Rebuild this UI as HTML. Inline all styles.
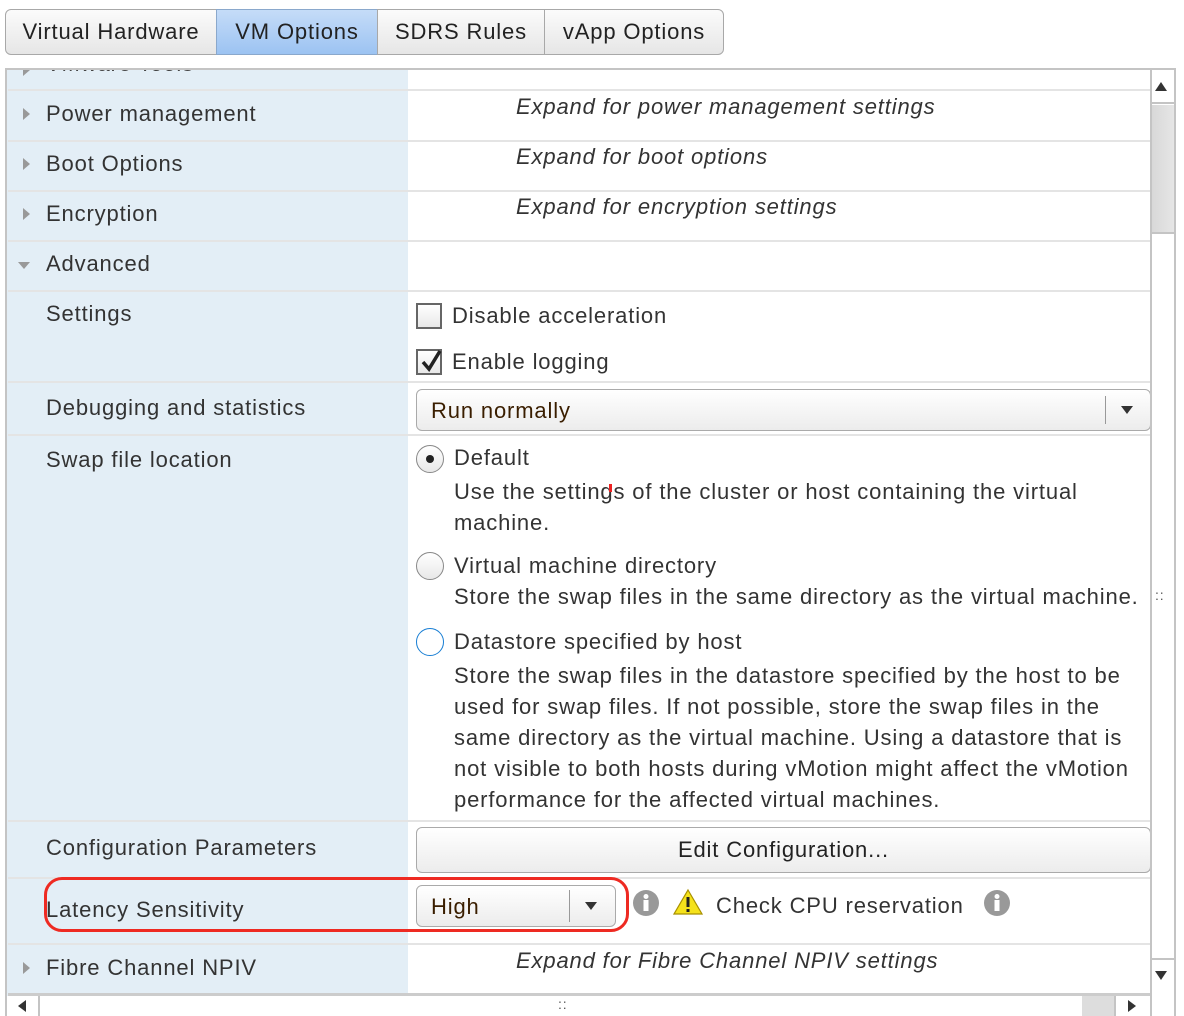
<!DOCTYPE html>
<html><head><meta charset="utf-8"><style>
*{margin:0;padding:0;box-sizing:border-box}
body{width:1184px;height:1016px;background:#fff;font-family:"Liberation Sans",sans-serif;color:#333;position:relative;overflow:hidden;letter-spacing:0.85px}
.a{position:absolute}
.t{font-size:22px;white-space:nowrap}
.i{font-style:italic}
.tab{position:absolute;top:9px;height:46px;border:1px solid #a8a8a8;background:linear-gradient(#fbfbfb,#e6e6e6);font-size:22px;line-height:44px;text-align:center;color:#222}
.hl{position:absolute;left:8px;width:1143px;height:2px;background:#e4e4e4}
.tri{position:absolute;width:0;height:0}
.sel{position:absolute;border:1px solid #aaa;border-radius:6px;background:linear-gradient(#fff,#ececec);font-size:22px;color:#3a1e00}
.cb{position:absolute;width:26px;height:26px;border:2px solid #666;background:linear-gradient(#fff,#e8e8e8)}
.rad{position:absolute;width:28px;height:28px;border-radius:50%;border:1.5px solid #888;background:linear-gradient(#fff,#e8e8e8)}
</style></head><body>
<div class="tab" style="left:5px;width:212px;border-radius:6px 0 0 6px">Virtual Hardware</div>
<div class="tab" style="left:216px;width:162px;background:linear-gradient(#c5dcf8,#9cc3f2);border-color:#8aa8cc">VM Options</div>
<div class="tab" style="left:377px;width:168px">SDRS Rules</div>
<div class="tab" style="left:544px;width:180px;border-radius:0 6px 6px 0">vApp Options</div>

<div class="a" style="left:5px;top:68px;width:1171px;height:948px;border:2px solid #c4c4c4;border-bottom:none"></div>
<div class="a" style="left:7px;top:70px;width:401px;height:926px;background:#e3eef6"></div>
<div class="a" style="left:7px;top:70px;width:401px;height:8px;overflow:hidden">
  <div class="a t" style="left:39px;top:-19px;color:#444">VMware Tools</div>
  <div class="tri" style="left:16px;top:-6px;border-left:7px solid #999;border-top:6px solid transparent;border-bottom:6px solid transparent"></div>
</div>

<div class="hl" style="top:89px"></div>
<div class="hl" style="top:140px"></div>
<div class="hl" style="top:190px"></div>
<div class="hl" style="top:240px"></div>
<div class="hl" style="top:290px"></div>
<div class="hl" style="top:381px"></div>
<div class="hl" style="top:434px"></div>
<div class="hl" style="top:820px"></div>
<div class="hl" style="top:877px"></div>
<div class="hl" style="top:943px"></div>
<div class="hl" style="top:993px;height:3px;background:#ccc"></div>

<div class="tri" style="left:23px;top:108px;border-left:7px solid #999;border-top:6px solid transparent;border-bottom:6px solid transparent"></div>
<div class="tri" style="left:23px;top:158px;border-left:7px solid #999;border-top:6px solid transparent;border-bottom:6px solid transparent"></div>
<div class="tri" style="left:23px;top:208px;border-left:7px solid #999;border-top:6px solid transparent;border-bottom:6px solid transparent"></div>
<div class="tri" style="left:18px;top:262px;border-top:7px solid #999;border-left:6px solid transparent;border-right:6px solid transparent"></div>
<div class="tri" style="left:23px;top:962px;border-left:7px solid #999;border-top:6px solid transparent;border-bottom:6px solid transparent"></div>

<div class="a t" style="left:46px;top:101px">Power management</div>
<div class="a t" style="left:46px;top:151px">Boot Options</div>
<div class="a t" style="left:46px;top:201px">Encryption</div>
<div class="a t" style="left:46px;top:251px">Advanced</div>
<div class="a t" style="left:46px;top:301px">Settings</div>
<div class="a t" style="left:46px;top:395px">Debugging and statistics</div>
<div class="a t" style="left:46px;top:447px">Swap file location</div>
<div class="a t" style="left:46px;top:835px">Configuration Parameters</div>
<div class="a t" style="left:46px;top:897px">Latency Sensitivity</div>
<div class="a t" style="left:46px;top:955px">Fibre Channel NPIV</div>

<div class="a t i" style="left:516px;top:94px">Expand for power management settings</div>
<div class="a t i" style="left:516px;top:144px">Expand for boot options</div>
<div class="a t i" style="left:516px;top:194px">Expand for encryption settings</div>
<div class="a t i" style="left:516px;top:948px">Expand for Fibre Channel NPIV settings</div>

<div class="cb" style="left:416px;top:303px"></div>
<div class="a t" style="left:452px;top:303px">Disable acceleration</div>
<div class="cb" style="left:416px;top:349px"></div>
<svg class="a" style="left:418px;top:348px" width="26" height="26"><path d="M5 14 L11 21 L22 3" stroke="#222" stroke-width="3.5" fill="none"/></svg>
<div class="a t" style="left:452px;top:349px">Enable logging</div>

<div class="sel" style="left:416px;top:389px;width:735px;height:42px"><span class="a" style="left:14px;top:8px">Run normally</span><div class="a" style="left:688px;top:6px;width:1px;height:28px;background:#999"></div><div class="tri" style="left:704px;top:16px;border-top:8px solid #333;border-left:6px solid transparent;border-right:6px solid transparent"></div></div>

<div class="rad" style="left:416px;top:445px"></div><div class="a" style="left:426px;top:455px;width:8px;height:8px;border-radius:50%;background:#222"></div>
<div class="a t" style="left:454px;top:445px">Default</div>
<div class="a t" style="left:454px;top:476px;line-height:31px;white-space:normal;width:690px">Use the settings of the cluster or host containing the virtual machine.</div>
<div class="a" style="left:609px;top:484px;width:3px;height:8px;background:#e22"></div>
<div class="rad" style="left:416px;top:552px"></div>
<div class="a t" style="left:454px;top:553px">Virtual machine directory</div>
<div class="a t" style="left:454px;top:584px">Store the swap files in the same directory as the virtual machine.</div>
<div class="rad" style="left:416px;top:628px;border-color:#1a7fd4;background:#fff"></div>
<div class="a t" style="left:454px;top:629px">Datastore specified by host</div>
<div class="a t" style="left:454px;top:660px;line-height:31px;white-space:normal;width:690px">Store the swap files in the datastore specified by the host to be used for swap files. If not possible, store the swap files in the same directory as the virtual machine. Using a datastore that is not visible to both hosts during vMotion might affect the vMotion performance for the affected virtual machines.</div>

<div class="sel" style="left:416px;top:827px;width:735px;height:46px;color:#222;text-align:center;line-height:44px">Edit Configuration...</div>

<div class="sel" style="left:416px;top:885px;width:200px;height:42px"><span class="a" style="left:14px;top:8px">High</span><div class="a" style="left:152px;top:4px;width:1px;height:32px;background:#999"></div><div class="tri" style="left:168px;top:16px;border-top:8px solid #333;border-left:6px solid transparent;border-right:6px solid transparent"></div></div>
<div class="a" style="left:44px;top:877px;width:585px;height:55px;border:3px solid #ee2a22;border-radius:18px"></div>

<svg class="a" style="left:632px;top:889px" width="28" height="28"><circle cx="14" cy="14" r="13" fill="#999"/><circle cx="14" cy="7.5" r="2.5" fill="#fff"/><rect x="11.5" y="11" width="5" height="11" fill="#fff"/></svg>
<svg class="a" style="left:673px;top:888px" width="30" height="28"><path d="M15 2 L29 26 L1 26 Z" fill="#f5e21b" stroke="#a89000" stroke-width="1.2"/><rect x="13.5" y="9" width="3" height="10" fill="#222"/><rect x="13.5" y="21" width="3" height="3" fill="#222"/></svg>
<div class="a t" style="left:716px;top:893px">Check CPU reservation</div>
<svg class="a" style="left:983px;top:889px" width="28" height="28"><circle cx="14" cy="14" r="13" fill="#999"/><circle cx="14" cy="7.5" r="2.5" fill="#fff"/><rect x="11.5" y="11" width="5" height="11" fill="#fff"/></svg>

<div class="a" style="left:1150px;top:70px;width:2px;height:926px;background:#c4c4c4"></div>
<div class="a" style="left:1152px;top:70px;width:22px;height:34px;border-bottom:2px solid #c4c4c4"></div>
<div class="tri" style="left:1155px;top:82px;border-bottom:9px solid #333;border-left:6px solid transparent;border-right:6px solid transparent"></div>
<div class="a" style="left:1152px;top:105px;width:22px;height:129px;background:linear-gradient(90deg,#d8d8d8,#e6e6e6);border-bottom:2px solid #c4c4c4"></div>
<div class="a" style="left:1152px;top:958px;width:22px;height:38px;border-top:2px solid #c4c4c4"></div>
<div class="tri" style="left:1155px;top:971px;border-top:9px solid #333;border-left:6px solid transparent;border-right:6px solid transparent"></div>
<div class="a" style="left:1155px;top:592px;font-size:14px;line-height:7px;color:#555">::</div>
<div class="a" style="left:7px;top:996px;width:1167px;height:20px;background:#fff"></div>
<div class="a" style="left:38px;top:996px;width:2px;height:20px;background:#c4c4c4"></div>
<div class="tri" style="left:18px;top:1000px;border-right:8px solid #333;border-top:6px solid transparent;border-bottom:6px solid transparent"></div>
<div class="a" style="left:1082px;top:996px;width:34px;height:20px;background:#ddd;border-right:2px solid #c4c4c4"></div>
<div class="tri" style="left:1128px;top:1000px;border-left:8px solid #333;border-top:6px solid transparent;border-bottom:6px solid transparent"></div>
<div class="a" style="left:1150px;top:996px;width:2px;height:20px;background:#c4c4c4"></div>
<div class="a" style="left:558px;top:1001px;font-size:14px;line-height:7px;color:#555">::</div>
</body></html>
